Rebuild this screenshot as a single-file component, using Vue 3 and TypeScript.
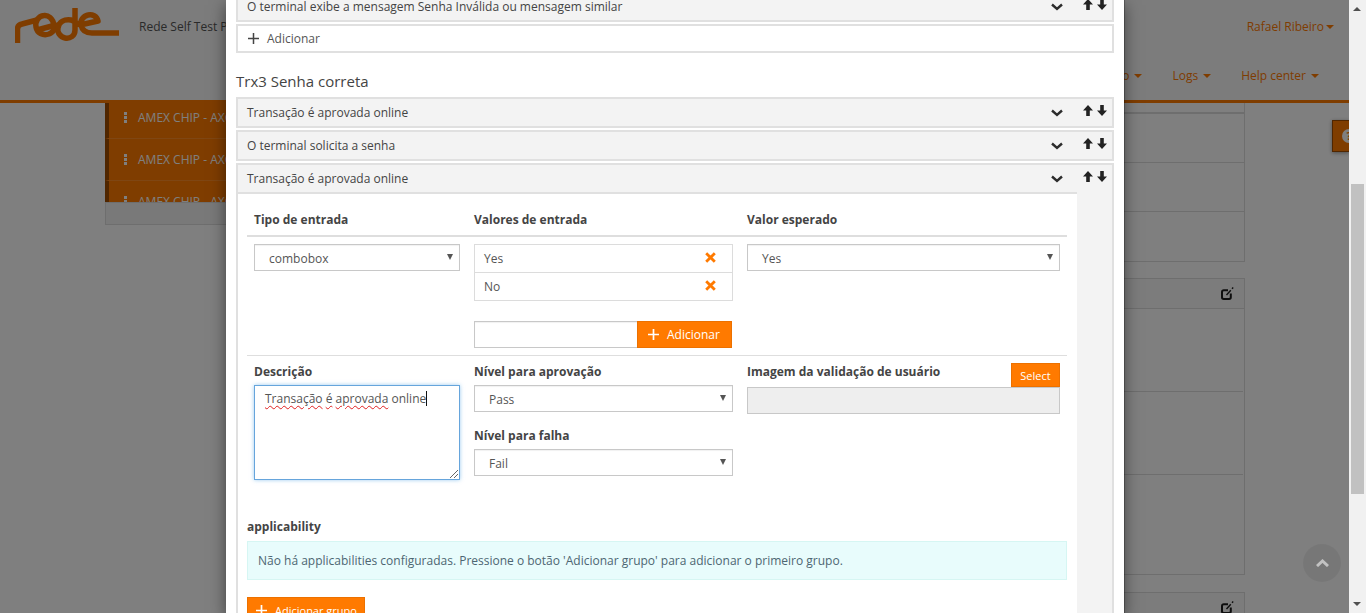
<script setup lang="ts">
interface Row { title: string; open?: boolean }
const navItems: string[] = ['Logs', 'Help center']
const listRows: number[] = [1, 2, 3]
const rows: Row[] = [
  { title: 'Transação é aprovada online' },
  { title: 'O terminal solicita a senha' }
]
const values: string[] = ['Yes', 'No']
</script>

<template>
  <div class="screen">
    <div class="page">
      <header class="topbar">
        <div class="brand-line">
          <svg class="logo" width="106" height="36" viewBox="15 8 106 36" fill="none" stroke="#ff7a00" stroke-width="5.500" stroke-linejoin="round">
            <path d="M17.500 43 V29 Q17.500 25 22 24 L37 20" />
            <path d="M37 30 L54 25.500 C53 18 48 15 44 15.500 C38 16 35 22 36 27 C37 33 43 36 49 34 C54 32 56 27 59 24" />
            <path d="M75 8 V30 C75 36 70 39 65 38 C60 37 57 32 58 28 C59 22 64 19 71 20 C75 21 77 24 80 25 L98 21 C97 16 92 14 88 15 C83 16 80 21 81 25 C82 30 86 33 92 33 H119" />
          </svg>
          <span class="app-name">Rede Self Test P</span>
          <span class="user">Rafael Ribeiro<i class="caret"></i></span>
        </div>
        <nav class="nav">
          <span class="nav-item">o<i class="caret nav-caret"></i></span>
          <span v-for="item in navItems" :key="item" class="nav-item">{{ item }}<i class="caret nav-caret"></i></span>
        </nav>
      </header>

      <main class="backdrop-body">
        <section class="side-list">
          <div class="side-rows">
            <div v-for="n in listRows" :key="n" class="side-row">
              <i class="kebab"></i><span>AMEX CHIP - AXC</span>
            </div>
          </div>
          <div class="side-foot"></div>
        </section>
        <section class="panels">
          <div class="panel panel-one">
            <div class="p-row p-r1"></div>
            <div class="p-row p-r2"></div>
            <div class="p-row p-r3"></div>
          </div>
          <div class="panel panel-two">
            <div class="p-head">
              <svg class="edit" width="13" height="13" viewBox="0 0 13 13" fill="none" stroke="#1d1d1d"><path d="M9.800 6.500 V10.300 A1.700 1.700 0 0 1 8.100 12 H2.700 A1.700 1.700 0 0 1 1 10.300 V5 A1.700 1.700 0 0 1 2.700 3.300 H7" stroke-width="2" /><path d="M5.500 8 L9.800 3.200 M11 1.800 L12.200 .6" stroke-width="1.400" /></svg>
            </div>
            <div class="p-cell c1"></div>
            <div class="p-cell c2"></div>
            <div class="p-cell c3"></div>
          </div>
          <div class="panel panel-three">
            <div class="p-head">
              <svg class="edit" width="13" height="13" viewBox="0 0 13 13" fill="none" stroke="#1d1d1d"><path d="M9.800 6.500 V10.300 A1.700 1.700 0 0 1 8.100 12 H2.700 A1.700 1.700 0 0 1 1 10.300 V5 A1.700 1.700 0 0 1 2.700 3.300 H7" stroke-width="2" /><path d="M5.500 8 L9.800 3.200 M11 1.800 L12.200 .6" stroke-width="1.400" /></svg>
            </div>
          </div>
        </section>
      </main>

      <div class="help-tab"><span class="help-dot">?</span></div>

      <div class="overlay"></div>

      <div class="to-top">
        <svg width="13" height="8" viewBox="0 0 13 8" fill="none" stroke="#c2c2c2" stroke-width="3"><path d="M1 7 L6.500 2 L12 7" /></svg>
      </div>

      <div class="modal">
        <div class="modal-body">
          <div class="row">
            <div class="row-main"><div class="row-head"><span>O terminal exibe a mensagem Senha Inválida ou mensagem similar</span>
              <svg class="chev" width="12" height="8" viewBox="0 0 12 8" fill="none" stroke="#2c2c2c" stroke-width="2.400"><path d="M1 1.500 L6 6 L11 1.500" /></svg>
            </div></div>
            <div class="strip">
              <svg width="10" height="11" viewBox="0 0 10 11" fill="#222"><path d="M5 0 L10 5.500 H6.800 V11 H3.200 V5.500 H0 Z" /></svg>
              <svg width="10" height="11" viewBox="0 0 10 11" fill="#222"><path d="M5 11 L10 5.500 H6.800 V0 H3.200 V5.500 H0 Z" /></svg>
            </div>
          </div>
          <div class="add-row">
            <svg width="11" height="11" viewBox="0 0 11 11" stroke="#444" stroke-width="1.500"><path d="M5.500 0 V11 M0 5.500 H11" /></svg>
            <span>Adicionar</span>
          </div>
          <h4 class="group-title">Trx3 Senha correta</h4>

          <div v-for="r in rows" :key="r.title" class="row row-gap">
            <div class="row-main"><div class="row-head"><span>{{ r.title }}</span>
              <svg class="chev" width="12" height="8" viewBox="0 0 12 8" fill="none" stroke="#2c2c2c" stroke-width="2.400"><path d="M1 1.500 L6 6 L11 1.500" /></svg>
            </div></div>
            <div class="strip">
              <svg width="10" height="11" viewBox="0 0 10 11" fill="#222"><path d="M5 0 L10 5.500 H6.800 V11 H3.200 V5.500 H0 Z" /></svg>
              <svg width="10" height="11" viewBox="0 0 10 11" fill="#222"><path d="M5 11 L10 5.500 H6.800 V0 H3.200 V5.500 H0 Z" /></svg>
            </div>
          </div>

          <div class="row row-gap">
            <div class="row-main">
              <div class="row-head open"><span>Transação é aprovada online</span>
                <svg class="chev" width="12" height="8" viewBox="0 0 12 8" fill="none" stroke="#2c2c2c" stroke-width="2.400"><path d="M1 1.500 L6 6 L11 1.500" /></svg>
              </div>
              <div class="content">
                <div class="grid grid-head">
                  <div class="cell label">Tipo de entrada</div>
                  <div class="cell label">Valores de entrada</div>
                  <div class="cell label">Valor esperado</div>
                </div>
                <div class="grid grid-values">
                  <div class="cell">
                    <div class="select">combobox<i class="tri"></i></div>
                  </div>
                  <div class="cell">
                    <ul class="value-list">
                      <li v-for="v in values" :key="v">
                        <span>{{ v }}</span>
                        <svg width="11" height="11" viewBox="0 0 11 11" stroke="#ff7a00" stroke-width="2.800"><path d="M1.200 1.200 L9.800 9.800 M9.800 1.200 L1.200 9.800" /></svg>
                      </li>
                    </ul>
                    <div class="add-value">
                      <input class="plain-input" type="text" />
                      <button class="btn btn-add" type="button">
                        <svg width="11" height="11" viewBox="0 0 11 11" stroke="#fff" stroke-width="1.700"><path d="M5.500 0 V11 M0 5.500 H11" /></svg>
                        Adicionar
                      </button>
                    </div>
                  </div>
                  <div class="cell">
                    <div class="select">Yes<i class="tri"></i></div>
                  </div>
                </div>
                <div class="grid grid-meta">
                  <div class="cell">
                    <div class="label field-label">Descrição</div>
                    <div class="textarea">
                      <span class="typed"><span class="misspelt">Transação</span> <span class="misspelt">é</span> <span class="misspelt">aprovada</span> online</span><i class="text-caret"></i>
                      <svg class="grip" width="10" height="10" viewBox="0 0 10 10" stroke="#666" stroke-width="1"><path d="M1 9 L9 1 M5 9 L9 5" /></svg>
                    </div>
                  </div>
                  <div class="cell">
                    <div class="label field-label">Nível para aprovação</div>
                    <div class="select">Pass<i class="tri"></i></div>
                    <div class="label field-label second">Nível para falha</div>
                    <div class="select">Fail<i class="tri"></i></div>
                  </div>
                  <div class="cell cell-image">
                    <div class="image-head">
                      <span class="label image-label">Imagem da validação de usuário</span>
                      <button class="btn btn-select" type="button">Select</button>
                    </div>
                    <div class="disabled-input"></div>
                  </div>
                </div>
                <div class="label app-label">applicability</div>
                <div class="alert">Não há applicabilities configuradas. Pressione o botão 'Adicionar grupo' para adicionar o primeiro grupo.</div>
                <button class="btn btn-group" type="button">
                  <svg width="11" height="11" viewBox="0 0 11 11" stroke="#fff" stroke-width="1.700"><path d="M5.500 0 V11 M0 5.500 H11" /></svg>
                  Adicionar grupo
                </button>
              </div>
            </div>
            <div class="strip">
              <svg width="10" height="11" viewBox="0 0 10 11" fill="#222"><path d="M5 0 L10 5.500 H6.800 V11 H3.200 V5.500 H0 Z" /></svg>
              <svg width="10" height="11" viewBox="0 0 10 11" fill="#222"><path d="M5 11 L10 5.500 H6.800 V0 H3.200 V5.500 H0 Z" /></svg>
            </div>
          </div>
        </div>
      </div>
    </div>

    <aside class="scrollbar">
      <i class="sb-up"></i>
      <div class="sb-thumb"></div>
      <i class="sb-down"></i>
    </aside>
  </div>
</template>

<style scoped>
.screen {
  display: flex;
  width: 1366px;
  height: 613px;
  overflow: hidden;
  font-family: "Open Sans", "Noto Sans", sans-serif;
  font-size: 12px;
  color: #444;
}
.page {
  position: relative;
  width: 1349px;
  height: 613px;
  overflow: hidden;
  background: #fff;
}
.topbar {
  height: 103px;
  box-sizing: border-box;
  background: #f8f8f8;
  border-bottom: 3px solid #ff7a00;
  color: #ff7a00;
}
.brand-line {
  display: flex;
  align-items: flex-start;
  height: 66px;
  padding: 8px 15px 0 15px;
  box-sizing: border-box;
}
.logo { flex: none; }
.app-name {
  margin: 10px 0 0 18px;
  line-height: 18px;
  color: #555;
}
.user {
  margin: 10px 0 0 auto;
  line-height: 18px;
}
.caret {
  display: inline-block;
  margin-left: 2px;
  vertical-align: 2px;
  border-top: 4px solid #ff7a00;
  border-left: 4px solid transparent;
  border-right: 4px solid transparent;
}
.nav {
  display: flex;
  justify-content: flex-end;
  gap: 30px;
  padding-right: 30px;
  line-height: 20px;
}
.nav-caret { margin-left: 5px; }
.backdrop-body {
  display: flex;
  padding-left: 105px;
  background: #fff;
  height: 510px;
}
.side-list { width: 121px; flex: none; }
.side-rows {
  height: 99px;
  overflow: hidden;
}
.side-row {
  display: flex;
  align-items: center;
  gap: 11px;
  height: 42px;
  padding-left: 15px;
  box-sizing: border-box;
  background: #ff7a00;
  border-left: 4px solid #a04d00;
  border-bottom: 1px solid #ff8d26;
  color: #fff;
  white-space: nowrap;
  overflow: hidden;
}
.side-row:first-child { margin-top: -6px; }
.kebab {
  flex: none;
  width: 3px;
  height: 3px;
  background: #fff;
  box-shadow: 0 4px 0 #fff, 0 8px 0 #fff;
  transform: translateY(-4px);
}
.side-foot {
  height: 23px;
  background: #f3f3f3;
  border: 1px solid #ddd;
  box-sizing: border-box;
  border-right: 0;
}
.panels {
  width: 1019px;
  flex: none;
}
.panel {
  box-sizing: border-box;
  border-right: 1px solid #ddd;
}
.panel-one { height: 159px; border-bottom: 1px solid #ddd; }
.p-row { border-bottom: 1px solid #ddd; }
.p-r1 { height: 9px; border-bottom-width: 2px; }
.p-r2 { height: 48px; }
.p-r3 { height: 48px; }
.panel-two {
  height: 297px;
  margin-top: 16px;
  border-top: 1px solid #ddd;
  border-bottom: 1px solid #ddd;
}
.p-head {
  display: flex;
  justify-content: flex-end;
  align-items: center;
  height: 29px;
  padding-right: 10px;
  background: #f8f8f8;
  border-bottom: 1px solid #ddd;
}
.p-cell { border-bottom: 1px solid #ddd; height: 82px; margin-right: 1px; }
.p-cell.c3 { border: 0; }
.panel-three {
  margin-top: 17px;
  border-top: 1px solid #ddd;
}
.help-tab {
  position: absolute;
  right: 0;
  top: 120px;
  width: 17px;
  height: 32px;
  box-sizing: border-box;
  background: #ff7a00;
  border: 1px solid #a04d00;
  border-right: 0;
  box-shadow: 0 1px 4px rgba(0,0,0,.4);
  overflow: hidden;
}
.help-dot {
  display: block;
  width: 14px;
  height: 14px;
  margin: 8px 0 0 9px;
  border-radius: 50%;
  background: #fff;
  color: #ff7a00;
  font-size: 11px;
  font-weight: 700;
  line-height: 14px;
  text-align: center;
}
.overlay {
  position: absolute;
  inset: 0;
  background: rgba(0, 0, 0, .5);
}
.to-top {
  position: absolute;
  left: 1303px;
  top: 544px;
  width: 38px;
  height: 38px;
  display: flex;
  align-items: center;
  justify-content: center;
  border-radius: 50%;
  background: rgba(0, 0, 0, .06);
}
.to-top svg { margin-top: -1px; }
.modal {
  position: absolute;
  left: 226px;
  top: 0;
  width: 898px;
  height: 613px;
  background: #fff;
  box-shadow: 0 5px 15px rgba(0, 0, 0, .5), 1px 0 0 rgba(0,0,0,.25);
  overflow: hidden;
}
.modal-body {
  margin-top: -9px;
  padding: 0 10px;
}
.row {
  display: flex;
  box-sizing: border-box;
  border: 2px solid #e0e0e0;
  background: #f3f3f3;
}
.row-gap { margin-top: 2px; }
.row-main { flex: 1; min-width: 0; }
.row-head {
  display: flex;
  align-items: center;
  justify-content: space-between;
  height: 27px;
  padding: 0 14px 0 9px;
  color: #444;
  line-height: 16px;
}
.row-head.open {
  box-sizing: border-box;
  border-bottom: 2px solid #e0e0e0;
  height: 29px;
}
.chev { flex: none; margin-top: 1px; }
.strip {
  flex: none;
  width: 35px;
  height: 27px;
  box-sizing: border-box;
  padding: 6px 5px 0 6px;
  display: flex;
  justify-content: space-between;
  align-items: flex-start;
}
.add-row {
  display: flex;
  align-items: center;
  gap: 8px;
  height: 29px;
  margin-top: 2px;
  padding-left: 10px;
  box-sizing: border-box;
  border: 2px solid #e0e0e0;
  color: #555;
}
.group-title {
  margin: 18px 0 6px;
  font-size: 15px;
  font-weight: 400;
  line-height: 20px;
  color: #444;
}
.content {
  background: #fff;
  padding: 0 10px 0 9px;
}
.grid {
  display: grid;
  grid-template-columns: 220px 273px 327px;
}
.cell { padding: 0 7px; box-sizing: border-box; min-width: 0; }
.label {
  font-weight: 700;
  line-height: 16px;
  color: #444;
}
.grid-head {
  padding: 18px 0 7px;
  border-bottom: 2px solid #dedede;
}
.grid-values {
  height: 119px;
  box-sizing: border-box;
  padding-top: 7px;
  border-bottom: 1px solid #dedede;
}
.select {
  position: relative;
  height: 27px;
  box-sizing: border-box;
  padding-left: 14px;
  border: 1px solid #c8c8c8;
  box-shadow: inset 0 1px 1px rgba(0,0,0,.06);
  color: #555;
  line-height: 27px;
}
.tri {
  position: absolute;
  right: 6px;
  top: 9px;
  border-top: 6px solid #555;
  border-left: 3.500px solid transparent;
  border-right: 3.500px solid transparent;
}
.value-list {
  margin: 0;
  padding: 0;
  list-style: none;
  border: 1px solid #dcdcdc;
}
.value-list li {
  display: flex;
  align-items: center;
  justify-content: space-between;
  height: 27px;
  padding: 0 16px 0 9px;
  color: #555;
}
.value-list li + li { border-top: 1px solid #dcdcdc; }
.value-list li svg { margin-top: -3px; }
.add-value {
  display: flex;
  margin-top: 20px;
  padding-right: 1px;
}
.plain-input {
  flex: 1;
  min-width: 0;
  height: 27px;
  box-sizing: border-box;
  padding: 0;
  border: 1px solid #c8c8c8;
  border-right: 0;
  box-shadow: inset 0 1px 1px rgba(0,0,0,.06);
  outline: none;
}
.btn {
  display: inline-flex;
  align-items: center;
  font-family: inherit;
  color: #fff;
  background: #ff7a00;
  border: 1px solid #ec7100;
  padding: 0;
}
.btn-add {
  flex: none;
  width: 95px;
  height: 27px;
  padding-left: 10px;
  gap: 8px;
  font-size: 12px;
  box-sizing: border-box;
}
.grid-meta {
  padding-top: 8px;
}
.field-label { margin-bottom: 5px; }
.field-label.second { margin-top: 16px; }
.cell-image { margin-top: -1px; }
.image-label { margin-top: 1px; }
.textarea {
  position: relative;
  height: 95px;
  box-sizing: border-box;
  padding: 4px 10px;
  border: 1px solid #66a5dc;
  box-shadow: 0 0 4px rgba(102, 175, 233, .65);
  color: #555;
  line-height: 18px;
  white-space: nowrap;
}
.misspelt {
  text-decoration: underline wavy #e02020 1px;
  text-underline-offset: 2px;
}
.text-caret {
  display: inline-block;
  width: 1px;
  height: 15px;
  background: #111;
  vertical-align: -3px;
}
.grip { position: absolute; right: 0; bottom: 0; }
.image-head {
  display: flex;
  justify-content: space-between;
  align-items: flex-start;
  height: 24px;
}
.btn-select {
  width: 49px;
  height: 24px;
  justify-content: center;
  font-size: 11px;
  box-sizing: border-box;
}
.disabled-input {
  height: 27px;
  box-sizing: border-box;
  background: #eee;
  border: 1px solid #c8c8c8;
}
.app-label { margin-top: 39px; }
.alert {
  margin-top: 6px;
  height: 39px;
  box-sizing: border-box;
  padding: 0 10px;
  background: #e8fcfc;
  border: 1px solid #d6f6f3;
  color: #4d6672;
  line-height: 37px;
}
.btn-group {
  margin-top: 17px;
  width: 118px;
  height: 27px;
  box-sizing: border-box;
  padding-left: 8px;
  gap: 8px;
  font-size: 11px;
  white-space: nowrap;
}
.scrollbar {
  position: relative;
  flex: none;
  width: 17px;
  height: 613px;
  background: #f1f1f1;
}
.sb-up {
  position: absolute;
  left: 4px;
  top: 7px;
  border-bottom: 4px solid #505050;
  border-left: 4px solid transparent;
  border-right: 4px solid transparent;
}
.sb-down {
  position: absolute;
  left: 4px;
  bottom: 7px;
  border-top: 4px solid #505050;
  border-left: 4px solid transparent;
  border-right: 4px solid transparent;
}
.sb-thumb {
  position: absolute;
  left: 2px;
  top: 184px;
  width: 13px;
  height: 310px;
  background: #c1c1c1;
}
</style>
